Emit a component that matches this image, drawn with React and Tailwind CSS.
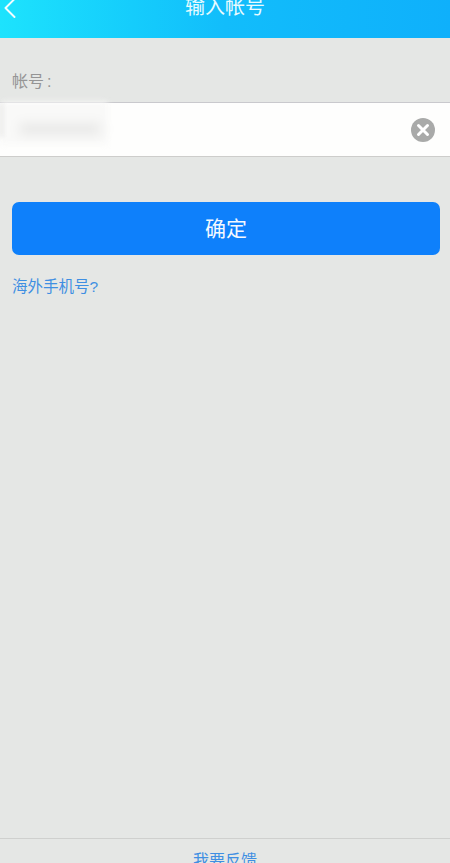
import React from 'react';
import { ChevronLeft } from 'lucide-react';

const font = { fontFamily: '"Liberation Sans", "Noto Sans CJK SC", sans-serif' };

const App = () => {
    return (
        <div style={font} className="w-[450px] h-[863px] overflow-hidden flex flex-col bg-[#e5e7e5]">
            {/* Header */}
            <div className="h-[38px] shrink-0 relative overflow-hidden flex justify-center bg-gradient-to-r from-[#1de3fd] via-[#12bdfb] to-[#0fb0fb]">
                <ChevronLeft className="absolute left-[-8px] top-[-10px] w-[36px] h-[36px] text-[#f2fdff]" strokeWidth={1.3} />
                <span className="text-[20px] leading-[20px] mt-[-3px] text-[#e8fbff]">输入帐号</span>
            </div>

            {/* Account field */}
            <div className="pl-3 pt-[33px] pb-[10px] text-[16px] leading-[21px] text-[#959595]">
                帐号<span className="ml-[3px]">:</span>
            </div>
            <div className="h-[55px] shrink-0 relative flex items-center justify-end pr-[15px] bg-[#fefefd] border-y border-t-[#c9c9cd] border-b-[#cdcdcb]">
                <div className="absolute left-0 top-[-1px] w-[108px] h-[42px] bg-[#f9f9f8] blur-[3px]">
                    <div className="ml-[20px] mt-[22px] w-[80px] h-[10px] bg-[#e6e6e5] blur-[5px]"></div>
                </div>
                <div className="absolute left-0 top-0 w-[3px] h-[34px] bg-[#e6e6e5] blur-[2px]"></div>
                <div className="w-[24px] h-[24px] rounded-full bg-[#a9aaa9] flex items-center justify-center">
                    <svg width="14" height="14" viewBox="0 0 14 14">
                        <path d="M2.5 2.5 L11.5 11.5 M11.5 2.5 L2.5 11.5" stroke="#ffffff" strokeWidth="3" strokeLinecap="round" />
                    </svg>
                </div>
            </div>

            {/* Submit */}
            <div className="px-3 pt-[45px]">
                <button className="w-[428px] h-[53px] rounded-[7px] bg-[#0e80fb] text-[#f4f9ff] text-[21px] flex items-center justify-center">
                    确定
                </button>
            </div>
            <div className="pl-3 pt-[21px] text-[15.5px] leading-[22px] text-[#3f8fe2]">海外手机号?</div>

            {/* Footer */}
            <div className="mt-auto h-[25px] shrink-0 border-t border-[#cfd0ce] flex justify-center overflow-hidden">
                <span className="text-[16px] leading-[22px] mt-[11px] text-[#3f8fe2]">我要反馈</span>
            </div>
        </div>
    );
};

export default App;
